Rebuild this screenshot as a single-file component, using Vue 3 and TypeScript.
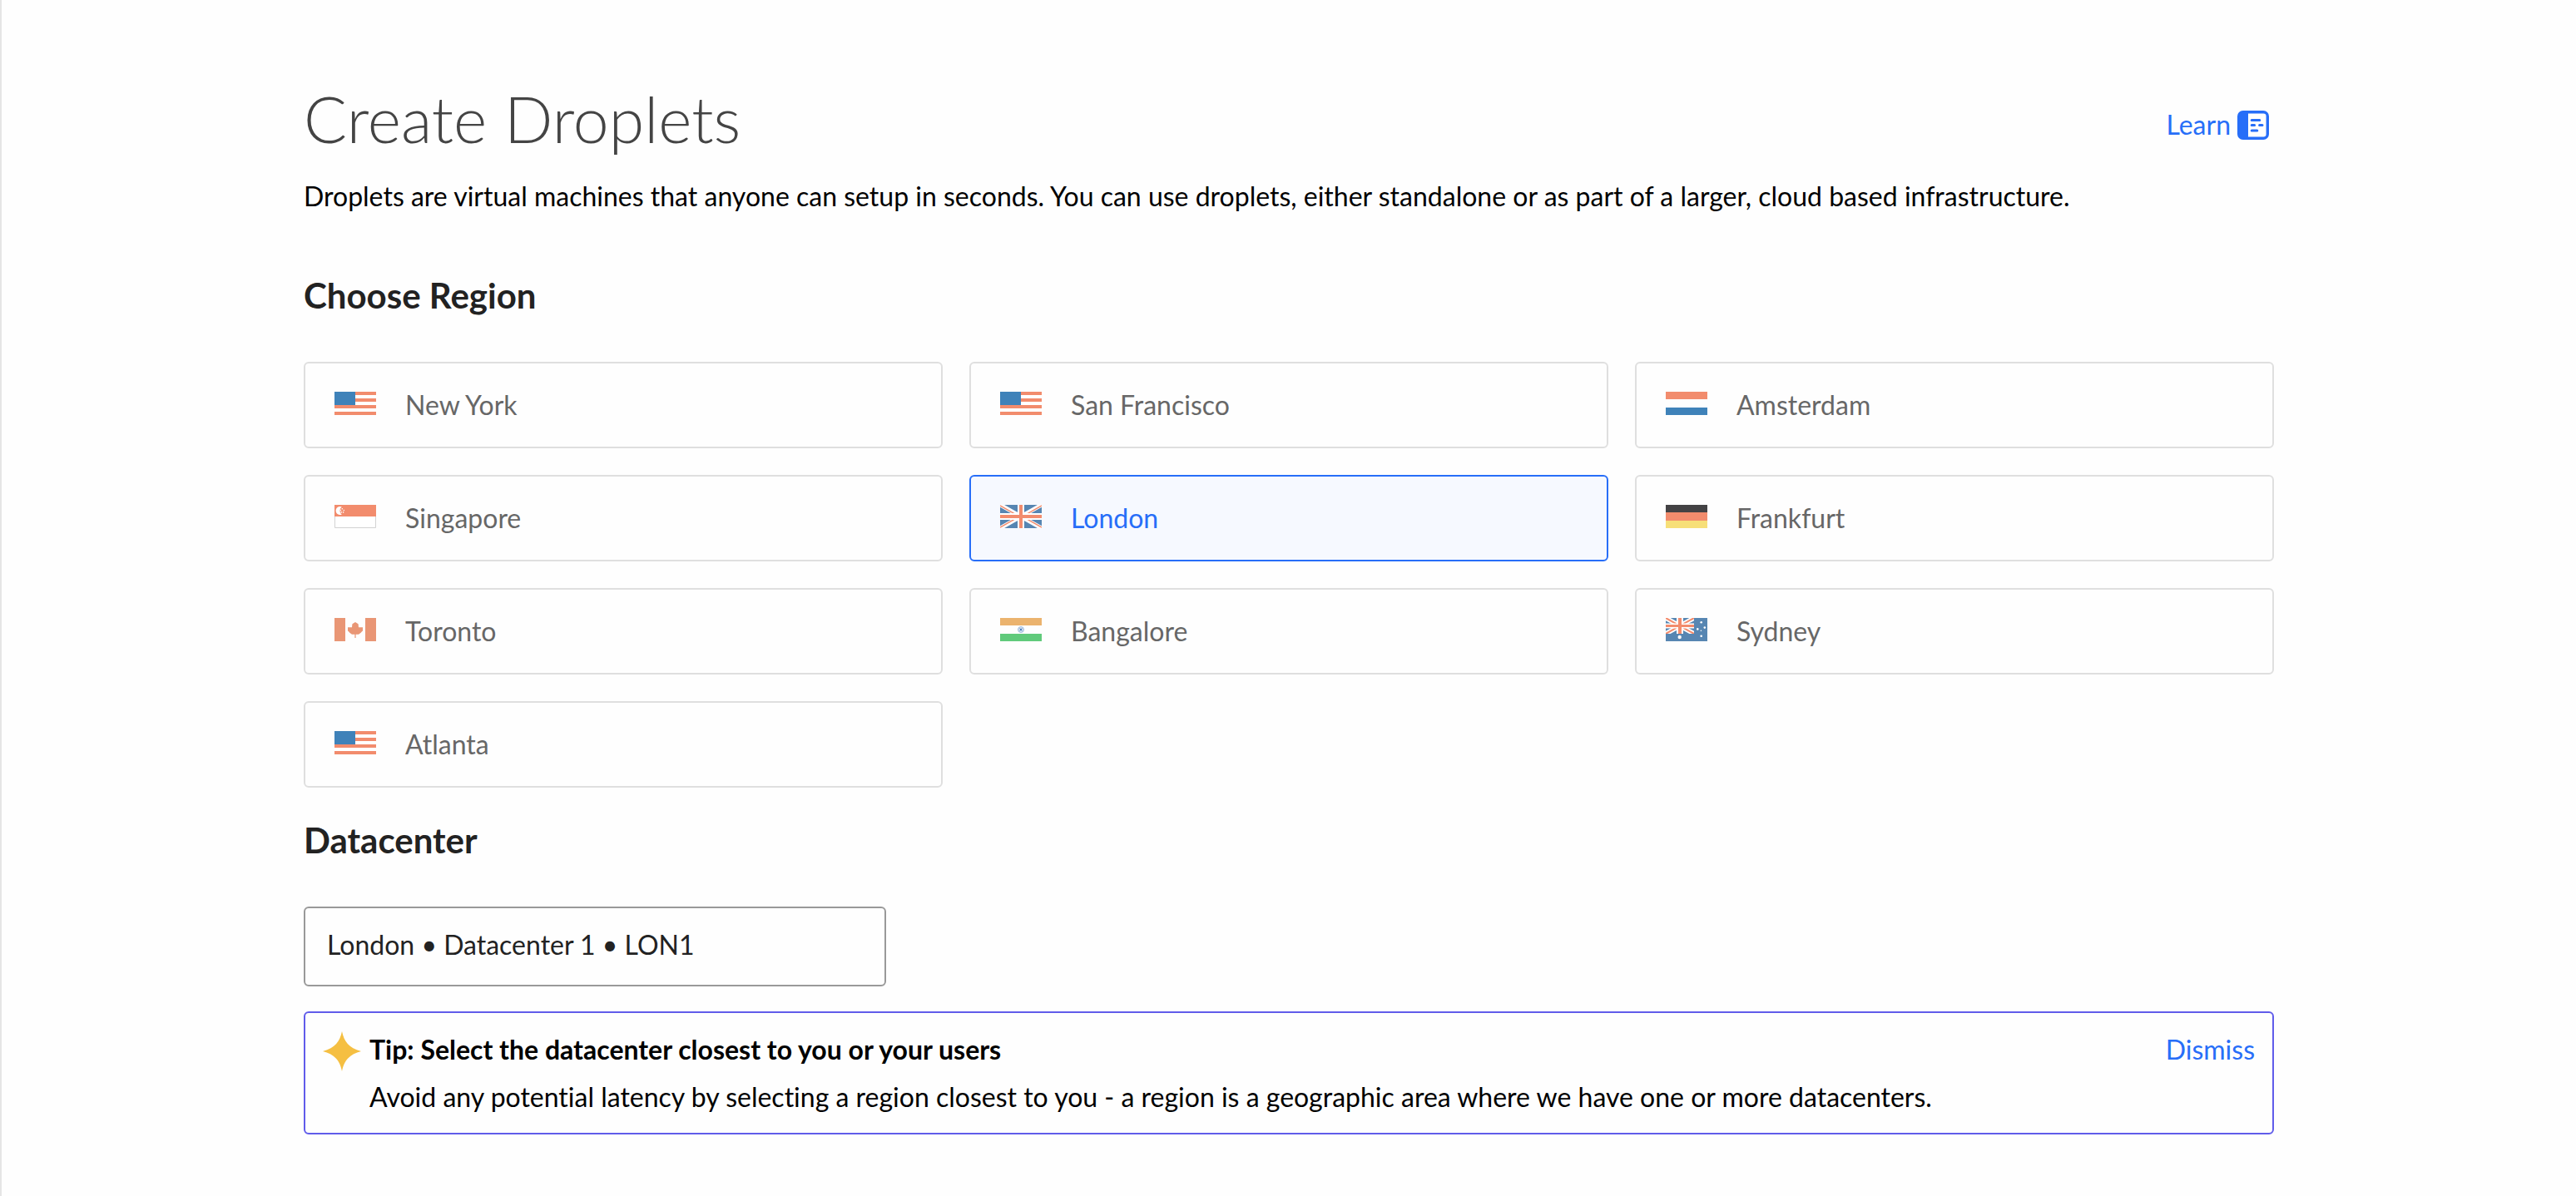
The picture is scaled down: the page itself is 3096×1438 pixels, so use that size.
<script setup lang="ts">
import { ref } from 'vue'

type Flag = 'us' | 'nl' | 'sg' | 'gb' | 'de' | 'ca' | 'in' | 'au'

interface Region {
  name: string
  flag: Flag
}

const regions: Region[] = [
  { name: 'New York', flag: 'us' },
  { name: 'San Francisco', flag: 'us' },
  { name: 'Amsterdam', flag: 'nl' },
  { name: 'Singapore', flag: 'sg' },
  { name: 'London', flag: 'gb' },
  { name: 'Frankfurt', flag: 'de' },
  { name: 'Toronto', flag: 'ca' },
  { name: 'Bangalore', flag: 'in' },
  { name: 'Sydney', flag: 'au' },
  { name: 'Atlanta', flag: 'us' },
]

const selected = ref('London')
const datacenter = ref('lon1')
const tipVisible = ref(true)
</script>

<template>
  <main class="page">
    <div class="content">
      <header class="header">
        <h1 class="title">Create Droplets</h1>
        <a class="learn" href="#">
          <span>Learn</span>
          <svg class="learn-icon" viewBox="0 0 38 35" aria-hidden="true">
            <rect x="1.7" y="1.7" width="34.6" height="31.6" rx="5" fill="none" stroke="currentColor" stroke-width="3.4" />
            <path d="M2 5a4 4 0 0 1 4-4h7v33H6a4 4 0 0 1-4-4z" fill="currentColor" />
            <path d="M17.2 11.5h9.6M17.2 17.5h3.4M26.6 17.5h3.4M17.2 24h6.6" fill="none" stroke="currentColor" stroke-width="3" stroke-linecap="round" />
          </svg>
        </a>
      </header>
      <p class="intro">Droplets are virtual machines that anyone can setup in seconds. You can use droplets, either standalone or as part of a larger, cloud based infrastructure.</p>

      <h2 id="region-heading" class="heading region-heading">Choose Region</h2>
      <div class="regions" role="radiogroup" aria-labelledby="region-heading">
        <label v-for="region in regions" :key="region.name" class="region" :class="{ selected: selected === region.name }">
          <input v-model="selected" class="region-input" type="radio" name="region" :value="region.name" />
          <svg class="flag" viewBox="0 0 50 28" aria-hidden="true">
            <template v-if="region.flag === 'us'">
              <path d="M0 0h50v28H0z" fill="#fff" />
              <path d="M0 0h50v4H0zM0 8h50v4H0zM0 16h50v4H0zM0 24h50v4H0z" fill="#f28c6d" />
              <path d="M0 0h25v16H0z" fill="#3f82b9" />
            </template>
            <template v-else-if="region.flag === 'nl'">
              <path d="M0 0h50v9H0z" fill="#f28c6d" />
              <path d="M0 19h50v9H0z" fill="#3f82b9" />
            </template>
            <template v-else-if="region.flag === 'sg'">
              <path d="M.5 13.5h49v14H.5z" fill="#fff" stroke="#d3d3d3" />
              <path d="M0 0h50v14H0z" fill="#f28c6d" />
              <path d="M8.8 2.5A5 5 0 1 0 8.8 11.5A5.4 5.4 0 0 1 8.8 2.5z" fill="#fff" />
              <g fill="#fff">
                <circle cx="9.3" cy="4.8" r=".8" />
                <circle cx="7.4" cy="6.5" r=".8" />
                <circle cx="11.3" cy="6.5" r=".8" />
                <circle cx="8.2" cy="8.9" r=".8" />
                <circle cx="10.6" cy="8.9" r=".8" />
              </g>
            </template>
            <template v-else-if="region.flag === 'gb'">
              <path d="M0 0h50v28H0z" fill="#5786b2" />
              <path d="M0 0l50 28M50 0L0 28" stroke="#fff" stroke-width="5" />
              <path d="M0 1l22 12.3M50 1L28 13.3M22 14.7L0 27M28 14.7L50 27" stroke="#f28c6d" stroke-width="1.5" />
              <path d="M21 0h8v28h-8zM0 10h50v8H0z" fill="#fff" />
              <path d="M23 0h4v28h-4zM0 12h50v4H0z" fill="#f28c6d" />
            </template>
            <template v-else-if="region.flag === 'de'">
              <path d="M0 0h50v9H0z" fill="#434244" />
              <path d="M0 9h50v10H0z" fill="#f28c6d" />
              <path d="M0 19h50v9H0z" fill="#f7df78" />
            </template>
            <template v-else-if="region.flag === 'ca'">
              <path d="M0 0h13v28H0zM37 0h13v28H37z" fill="#e99675" />
              <path d="M25 5l3.6 2.2l.4 4h5v4.3l-1 .8l-1.3 1.5l-2.7 1.9h-3.4V24h-1.2v-4.3H21l-2.7-1.9L17 16.3l-1-.8v-4.3h5l.4-4z" fill="#e99675" />
            </template>
            <template v-else-if="region.flag === 'in'">
              <path d="M0 0h50v9H0z" fill="#ebb36e" />
              <path d="M0 19h50v9H0z" fill="#60ca7b" />
              <circle cx="25" cy="14" r="3.5" fill="#d3e0f0" stroke="#a6c0e0" />
              <path d="M22.8 11.8l4.4 4.4M27.2 11.8l-4.4 4.4" stroke="#8fb0d8" stroke-width=".8" />
              <circle cx="25" cy="14" r="1.2" fill="#4a7dbd" />
            </template>
            <template v-else>
              <path d="M0 0h50v28H0z" fill="#5786b2" />
              <svg x="0" y="0" width="34" height="19" viewBox="0 0 34 19">
                <path d="M0 0l34 19M34 0L0 19" stroke="#fff" stroke-width="5.5" />
                <path d="M0 0l34 19M34 0L0 19" stroke="#f28c6d" stroke-width="2" />
                <path d="M13 0h8v19h-8zM0 6.5h34v6H0z" fill="#fff" />
                <path d="M15 0h4v19h-4zM0 8h34v3H0z" fill="#f28c6d" />
              </svg>
              <g fill="#fff">
                <circle cx="16.7" cy="23" r="2.2" />
                <circle cx="42.7" cy="5.3" r="1.3" />
                <circle cx="38.3" cy="13.4" r="1.3" />
                <circle cx="46.8" cy="11.6" r="1.3" />
                <circle cx="42.4" cy="15.2" r=".8" />
                <circle cx="42.7" cy="21.7" r="1.3" />
              </g>
            </template>
          </svg>
          <span class="region-name">{{ region.name }}</span>
        </label>
      </div>

      <h2 class="heading datacenter-heading"><label for="datacenter">Datacenter</label></h2>
      <select id="datacenter" v-model="datacenter" class="datacenter">
        <option value="lon1">London • Datacenter 1 • LON1</option>
      </select>

      <aside v-if="tipVisible" class="tip">
        <svg class="star" viewBox="0 0 48 48" aria-hidden="true">
          <path d="M24 0C26.5 12 32 20 47 24C32 28 26.5 36 24 48C21.5 36 16 28 1 24C16 20 21.5 12 24 0z" fill="#f5bf42" />
        </svg>
        <div class="tip-body">
          <strong class="tip-title">Tip: Select the datacenter closest to you or your users</strong>
          <p class="tip-text">Avoid any potential latency by selecting a region closest to you - a region is a geographic area where we have one or more datacenters.</p>
        </div>
        <button class="dismiss" type="button" @click="tipVisible = false">Dismiss</button>
      </aside>
    </div>
  </main>
</template>

<style>
body {
  margin: 0;
  background: #fefefe;
}
</style>

<style scoped>
.page {
  box-sizing: border-box;
  min-height: 100vh;
  padding: 98px 48px 72px;
  border-left: 2px solid #e5e5e5;
  font-family: Lato, 'Liberation Sans', sans-serif;
  font-size: 32px;
  font-variant-ligatures: none;
  line-height: 40px;
  color: #000;
}

.content {
  max-width: 2368px;
  margin: 0 auto;
}

.header {
  display: flex;
  justify-content: space-between;
  align-items: flex-start;
}

.title {
  margin: 0;
  font-size: 77px;
  font-weight: 300;
  line-height: 88px;
  color: #444;
}

.learn {
  display: flex;
  align-items: center;
  gap: 8px;
  margin-top: 32px;
  padding-right: 6px;
  color: #276ef8;
  text-decoration: none;
}

.learn-icon {
  width: 38px;
  height: 35px;
}

.intro {
  margin: 30px 0 0;
}

.heading {
  margin: 0 0 56px;
  font-size: 42px;
  font-weight: 700;
  line-height: 48px;
  color: #222;
}

.region-heading {
  margin-top: 75px;
}

.datacenter-heading {
  margin-top: 39px;
}

.regions {
  display: grid;
  grid-template-columns: repeat(3, 1fr);
  gap: 32px;
}

.region {
  display: flex;
  align-items: center;
  gap: 35px;
  box-sizing: border-box;
  height: 104px;
  padding: 0 35px 4px;
  border: 2px solid #dfdfdf;
  border-radius: 6px;
  color: #676767;
  cursor: pointer;
}

.region-name {
  padding-top: 3px;
}

.region.selected {
  border-color: #276ef8;
  background: #f6f9ff;
  color: #276ef8;
}

.region-input {
  position: absolute;
  opacity: 0;
  pointer-events: none;
}

.flag {
  flex: none;
  width: 50px;
  height: 28px;
}

.datacenter {
  display: block;
  box-sizing: border-box;
  width: 700px;
  max-width: 100%;
  height: 96px;
  padding: 0 26px 4px;
  appearance: none;
  border: 2px solid #999;
  border-radius: 6px;
  background: transparent;
  font: inherit;
  color: #222;
}

.tip {
  display: flex;
  align-items: flex-start;
  margin-top: 30px;
  padding: 22px 21px 23px 20px;
  border: 2px solid #605cea;
  border-radius: 6px;
}

.star {
  flex: none;
  width: 48px;
  height: 48px;
  margin-right: 9px;
}

.tip-body {
  flex: 1;
  padding-top: 2px;
}

.tip-title {
  display: block;
  font-weight: 700;
}

.tip-text {
  margin: 17px 0 0;
}

.dismiss {
  padding: 2px 0 0;
  border: 0;
  background: none;
  font: inherit;
  color: #276ef8;
  cursor: pointer;
}

@media (max-width: 1400px) {
  .regions {
    grid-template-columns: 1fr;
  }
}
</style>
